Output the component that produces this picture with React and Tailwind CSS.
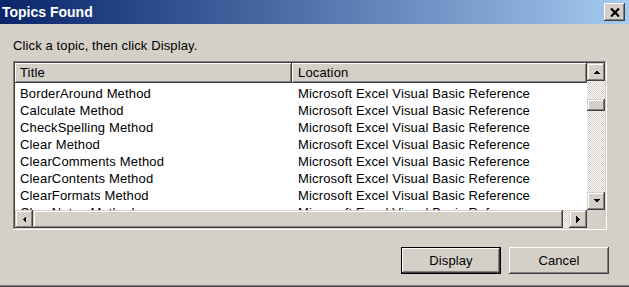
import React from 'react'

const topics = [
  'BorderAround Method',
  'Calculate Method',
  'CheckSpelling Method',
  'Clear Method',
  'ClearComments Method',
  'ClearContents Method',
  'ClearFormats Method',
  'ClearNotes Method',
]

// classic 3D edges
const raised = 'bg-[#d4d0c8] shadow-[inset_-1px_-1px_#404040,inset_1px_1px_#d4d0c8,inset_-2px_-2px_#808080,inset_2px_2px_#fff]'
const button = 'bg-[#d4d0c8] shadow-[inset_-1px_-1px_#404040,inset_1px_1px_#fff,inset_-2px_-2px_#808080,inset_2px_2px_#d4d0c8]'
const dither = 'bg-[image:conic-gradient(#fff_25%,#d4d0c8_0_50%,#fff_0_75%,#d4d0c8_0)] bg-[length:2px_2px]'

function Arrow({ dir }) {
  const pts = {
    up: '0,4 7,4 3.5,0.5',
    down: '0,0 7,0 3.5,3.5',
    left: '4,0 4,7 0.5,3.5',
    right: '0,0 0,7 3.5,3.5',
  }[dir]
  const vertical = dir === 'up' || dir === 'down'
  return (
    <svg width={vertical ? 7 : 4} height={vertical ? 4 : 7} viewBox={vertical ? '0 0 7 4' : '0 0 4 7'} shapeRendering="crispEdges">
      <polygon points={pts} fill="#000" />
    </svg>
  )
}

function ScrollButton({ dir }) {
  return (
    <div className={`w-[18px] h-[18px] shrink-0 flex items-center justify-center ${raised}`}>
      <Arrow dir={dir} />
    </div>
  )
}

export default function App() {
  return (
    <div className="w-[629px] h-[287px] bg-[#d4d0c8] flex flex-col overflow-hidden font-['Liberation_Sans',Arial,sans-serif] text-black shadow-[inset_0_-1px_#404040,inset_0_-2px_#808080]">
      {/* Title bar */}
      <div className="h-[24px] shrink-0 flex items-center pl-[2px] pr-[4px] bg-gradient-to-r from-[#0a246a] to-[#a6caf0]">
        <span className="flex-1 text-white font-bold text-[14px] leading-[16px]">Topics Found</span>
        <div className={`w-[21px] h-[18px] flex items-center justify-center ${button}`}>
          <svg width="10" height="9" viewBox="0 0 10 9">
            <path d="M1 0.5 L9 8.5 M9 0.5 L1 8.5" stroke="#000" strokeWidth="2.2" />
          </svg>
        </div>
      </div>

      <div className="pl-[13px] pt-[14px] text-[13px] leading-[16px] tracking-[0.12px]">Click a topic, then click Display.</div>

      {/* List */}
      <div className="ml-[13px] mt-[7px] w-[594px] h-[169px] p-[2px] shrink-0 bg-white shadow-[inset_-1px_-1px_#fff,inset_1px_1px_#808080,inset_-2px_-2px_#d4d0c8,inset_2px_2px_#404040]">
        <div className="h-full flex flex-col">
          <div className="flex-1 flex min-h-0">
            <div className="flex-1 flex flex-col overflow-hidden text-[13px] tracking-[0.16px]">
              <div className="h-[20px] shrink-0 flex leading-[20px]">
                <div className={`w-[277px] pl-[5px] ${button}`}>Title</div>
                <div className={`flex-1 pl-[6px] ${button}`}>Location</div>
              </div>
              <div className="pt-[2px]">
                {topics.map(t => (
                  <div key={t} className="h-[17px] flex leading-[17px] whitespace-nowrap">
                    <div className="w-[277px] pl-[5px]">{t}</div>
                    <div className="flex-1 pl-[6px]">Microsoft Excel Visual Basic Reference</div>
                  </div>
                ))}
              </div>
            </div>
            {/* vertical scrollbar */}
            <div className="w-[18px] flex flex-col">
              <ScrollButton dir="up" />
              <div className={`flex-1 flex flex-col ${dither}`}>
                <div className={`mt-[18px] h-[12px] ${raised}`} />
              </div>
              <ScrollButton dir="down" />
            </div>
          </div>
          <div className="h-[18px] shrink-0 flex">
            <ScrollButton dir="left" />
            <div className={`flex-1 ${raised}`} />
            <div className={`w-[6px] ${dither}`} />
            <ScrollButton dir="right" />
            <div className="w-[18px] bg-[#d4d0c8]" />
          </div>
        </div>
      </div>

      {/* Buttons */}
      <div className="mt-[17px] pr-[20px] flex justify-end gap-[8px] text-[13px] tracking-[0.12px]">
        <div className="w-[100px] h-[27px] border border-black">
          <div className={`h-full flex items-center justify-center ${button}`}>Display</div>
        </div>
        <div className={`w-[100px] h-[27px] flex items-center justify-center ${button}`}>Cancel</div>
      </div>
    </div>
  )
}
